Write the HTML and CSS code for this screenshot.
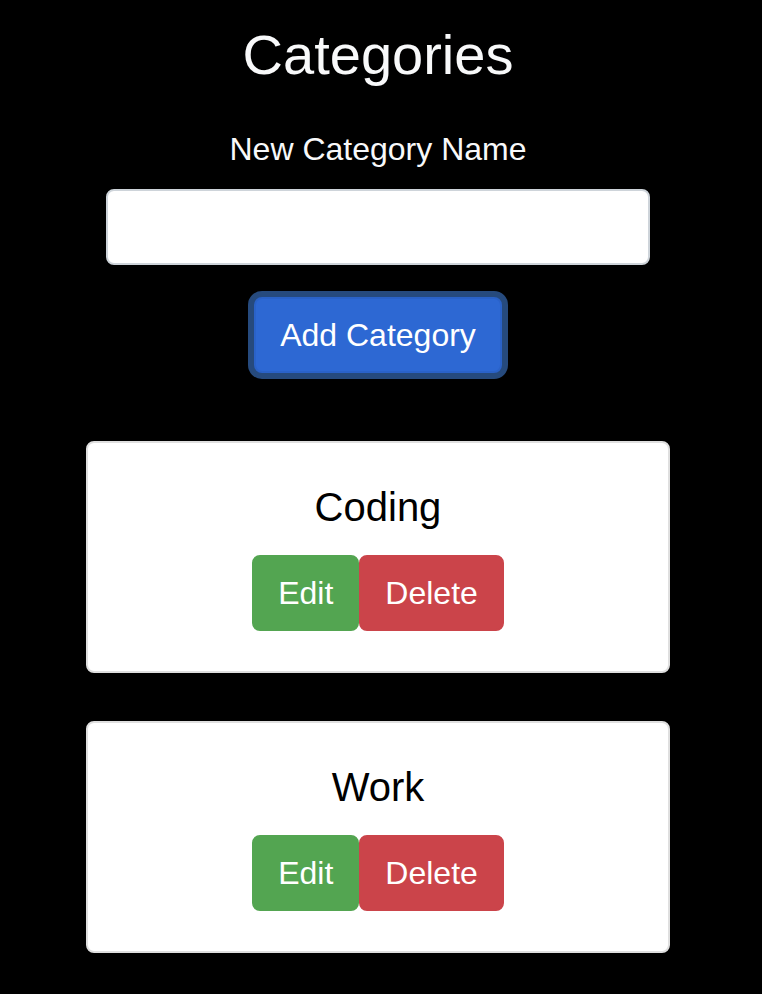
FILE: index.html
```html
<!DOCTYPE html>
<html lang="en">
<head>
<meta charset="utf-8">
<meta name="viewport" content="width=device-width, initial-scale=1">
<title>Categories</title>
<link rel="stylesheet" href="styles.css">
</head>
<body>
<main class="page">
  <h1 class="title">Categories</h1>
  <form class="category-form">
    <label class="label" for="category-name">New Category Name</label>
    <input class="input" id="category-name" type="text">
    <button class="btn btn-primary" type="button">Add Category</button>
  </form>
  <section class="card">
    <h2 class="card-title">Coding</h2>
    <div class="actions">
      <button class="btn btn-success" type="button">Edit</button>
      <button class="btn btn-danger" type="button">Delete</button>
    </div>
  </section>
  <section class="card">
    <h2 class="card-title">Work</h2>
    <div class="actions">
      <button class="btn btn-success" type="button">Edit</button>
      <button class="btn btn-danger" type="button">Delete</button>
    </div>
  </section>
</main>
</body>
</html>
```
FILE: styles.css
```css
* {
  box-sizing: border-box;
}

body {
  margin: 0;
  background: #000;
  color: #f8f9fa;
  font-family: "Liberation Sans", Arial, sans-serif;
  font-size: 32px;
  line-height: 48px;
  text-align: center;
}

.page {
  display: flex;
  flex-direction: column;
  gap: 48px;
  padding: 21px 92px 40px 86px;
}

.title {
  margin: 0 0 -12px;
  font-size: 56px;
  font-weight: 400;
  line-height: 68px;
}

.category-form {
  display: flex;
  flex-direction: column;
  align-items: center;
  padding: 0 20px;
  margin-bottom: 20px;
}

.label {
  margin-bottom: 16px;
}

.input {
  width: 100%;
  height: 76px;
  margin-bottom: 32px;
  padding: 12px 24px;
  border: 2px solid #ced4da;
  border-radius: 8px;
  background: #fff;
  font: inherit;
  outline: none;
}

.btn {
  padding: 12px 24px;
  border: 2px solid transparent;
  border-radius: 8px;
  color: #fff;
  font: inherit;
}

.btn-primary {
  border-color: #2a62c8;
  background: #2d68d3;
  box-shadow: 0 0 0 6px #264a7d;
}

.btn-success {
  border-color: #53a551;
  background: #53a551;
}

.btn-danger {
  border-color: #cb444a;
  background: #cb444a;
}

.card {
  padding: 40px;
  border: 2px solid #dfdfdf;
  border-radius: 8px;
  background: #fff;
  color: #000;
}

.card-title {
  margin: 0 0 24px;
  font-size: 40px;
  font-weight: 400;
  line-height: 48px;
}

.actions {
  display: flex;
  justify-content: center;
}
```
